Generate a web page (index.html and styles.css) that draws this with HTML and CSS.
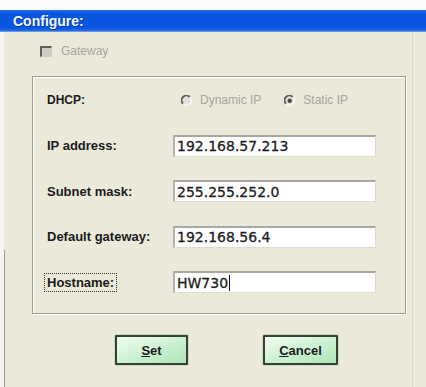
FILE: index.html
```
<!DOCTYPE html>
<html lang="en">
<head>
  <meta charset="UTF-8">
  <title>Configure</title>
  <link rel="stylesheet" href="styles.css">
</head>
<body>
  <!-- Titelleiste -->
  <div class="titlebar">Configure:</div>

  <div class="content">
    <!-- Gateway -->
    <div class="gateway">
      <span class="check"></span>
      <span>Gateway</span>
    </div>

    <!-- Netzwerk -->
    <div class="group">
      <div class="label small">DHCP:</div>
      <div class="radios">
        <span class="radio">
          <svg width="11" height="11" viewBox="0 0 12 12">
            <circle cx="6" cy="6" r="5" fill="#e4e3db"/>
            <path d="M2.2 9.5 A5 5 0 0 1 9.5 2.2" fill="none" stroke="#5c5c5c" stroke-width="2"/>
            <path d="M9.8 2.5 A5 5 0 0 1 2.5 9.8" fill="none" stroke="#fff" stroke-width="1.2"/>
          </svg>
          Dynamic IP
        </span>
        <span class="radio static">
          <svg width="11" height="11" viewBox="0 0 12 12">
            <circle cx="6" cy="6" r="5" fill="#e4e3db"/>
            <path d="M2.2 9.5 A5 5 0 0 1 9.5 2.2" fill="none" stroke="#5c5c5c" stroke-width="2"/>
            <path d="M9.8 2.5 A5 5 0 0 1 2.5 9.8" fill="none" stroke="#fff" stroke-width="1.2"/>
            <circle cx="6.2" cy="6.2" r="2.4" fill="#4a4a4a"/>
          </svg>
          Static IP
        </span>
      </div>

      <div class="label">IP address:</div>
      <div class="field">192.168.57.213</div>

      <div class="label">Subnet mask:</div>
      <div class="field">255.255.252.0</div>

      <div class="label">Default gateway:</div>
      <div class="field">192.168.56.4</div>

      <div class="label"><span class="focus">Hostname:</span></div>
      <div class="field">HW730<span class="caret"></span></div>
    </div>

    <!-- Knoepfe -->
    <div class="buttons">
      <button class="btn set"><u>S</u>et</button>
      <button class="btn cancel"><u>C</u>ancel</button>
    </div>
  </div>
</body>
</html>
```

FILE: styles.css
```
body {
  margin: 0;
  padding-top: 10px;
  background-color: #fbfbf9;
  font-family: "Liberation Sans", Arial, sans-serif;
  overflow: hidden;
}

.titlebar {
  height: 22px;
  line-height: 22px;
  padding-left: 13px;
  background: linear-gradient(to bottom, #2a6ee0 0px, #0a56e2 3px, #0a56e2 18px, #2b6fe0 21px, #a8c0e8 22px);
  color: #f4f8ff;
  font-weight: bold;
  font-size: 14px;
  text-shadow: 1px 1px 0 #0a3c9c;
}

.content {
  height: 355px;
  box-sizing: border-box;
  padding: 13px 0 0 32px;
  background:
    linear-gradient(#9c9c96, #9c9c96) no-repeat 4px 218px / 1px 100%,
    linear-gradient(#d9d6c6, #d9d6c6) no-repeat 412px 0 / 1px 100%,
    linear-gradient(to right, #f6f5ee 4px, #ebe9da 4px);
}

.gateway {
  display: flex;
  align-items: center;
  gap: 9px;
  height: 12px;
  margin-left: 8px;
  font-size: 12px;
  color: #a6a59c;
}

.check {
  width: 9px;
  height: 8px;
  border-top: 2px solid #5e5e5a;
  border-left: 2px solid #5e5e5a;
  border-right: 1px solid #cfcdc2;
  border-bottom: 1px solid #cfcdc2;
  background-color: #cdccc4;
}

.group {
  display: grid;
  grid-template-columns: 126px 203px;
  grid-auto-rows: 22px;
  row-gap: 23.5px;
  align-items: center;
  box-sizing: content-box;
  width: 358px;
  margin-top: 19px;
  padding: 12px 0 20px 14px;
  border: 1px solid #9d9b8c;
  box-shadow: inset 1px 1px 0 #fff, 1px 1px 0 #fff;
}

.label {
  font-weight: bold;
  font-size: 13px;
  color: #1b1b1b;
}

.label.small {
  font-size: 12px;
}

.focus {
  margin-left: -3px;
  padding: 1px 2px;
  border: 1px dotted #333;
}

.radios {
  display: flex;
  align-items: center;
  padding-left: 8px;
  font-size: 12px;
  color: #a6a59c;
}

.radio {
  display: flex;
  align-items: center;
  gap: 8px;
}

.radio.static {
  margin-left: 23px;
}

.field {
  height: 22px;
  box-sizing: border-box;
  display: flex;
  align-items: center;
  padding-left: 2px;
  background-color: white;
  border-top: 2px solid #a9a8a0;
  border-left: 2px solid #b3b2aa;
  border-right: 1px solid #dedcd2;
  border-bottom: 1px solid #dedcd2;
  font-family: "DejaVu Sans", Verdana, sans-serif;
  font-size: 14px;
  color: #1c1c1c;
  -webkit-text-stroke: 0.3px #1c1c1c;
}

.caret {
  width: 1px;
  height: 16px;
  margin-left: 1px;
  background-color: #111;
}

.buttons {
  display: flex;
  gap: 75px;
  margin-top: 21px;
  padding-left: 83px;
}

.btn {
  height: 30px;
  padding: 0;
  border: 2px solid #34432f;
  border-radius: 1px;
  background: linear-gradient(to bottom right, #f2fdf2, #c6efcd 60%, #aee3b8);
  font-family: "Liberation Sans", Arial, sans-serif;
  font-weight: bold;
  font-size: 13px;
  color: #1b1b1b;
  box-shadow: 0 0 0 1px #cfd8c8;
}

.btn.set {
  width: 73px;
}

.btn.cancel {
  width: 75px;
}
```
